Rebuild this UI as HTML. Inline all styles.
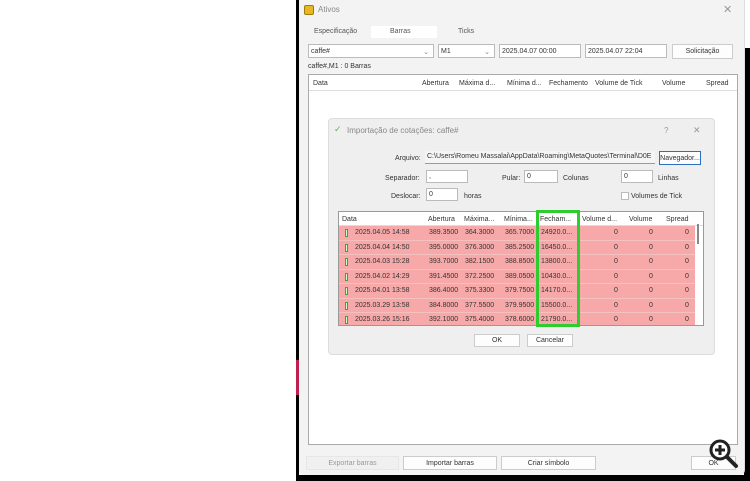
<!DOCTYPE html>
<html><head><meta charset="utf-8"><style>
*{margin:0;padding:0;box-sizing:border-box}
body{width:750px;height:481px;background:#fff;position:relative;overflow:hidden;font-family:"Liberation Sans",sans-serif;font-size:7px;color:#333}
.a{position:absolute}
.box{position:absolute;background:#fff;border:1px solid #bbb}
.btn{position:absolute;background:#fdfdfd;border:1px solid #ccc;text-align:center;color:#333}
.row{position:absolute;left:0;width:356px;height:14.5px;background:#f7a8a8;border-bottom:1px solid #f4c0c0}
.row span{position:absolute;top:3px}
.row i{position:absolute;left:6px;top:3px;width:3px;height:8px;border:1px solid #3a3;background:#cfc}
</style></head><body>
<div class="a" style="left:296px;top:0;width:3px;height:481px;background:#000"></div>
<div class="a" style="left:296px;top:360px;width:3px;height:35px;background:#c02050"></div>
<div class="a" style="left:744px;top:48px;width:6px;height:433px;background:#000"></div>
<div class="a" style="left:296px;top:475px;width:454px;height:6px;background:#000"></div>
<div class="a" style="left:299px;top:0;width:446px;height:475px;background:#f3f3f3;border-right:1px solid #ddd;border-radius:0 0 5px 5px"></div>
<div class="a" style="left:304px;top:5px;width:10px;height:10px;background:#e8b820;border-radius:2px;border:1px solid #a07c10"></div>
<div class="a" style="left:318px;top:5px;font-size:8px;color:#888">Ativos</div>
<div class="a" style="left:723px;top:3px;font-size:11px;color:#999">✕</div>
<div class="a" style="left:371px;top:26px;width:66px;height:12px;background:#fff"></div>
<div class="a" style="left:314px;top:28px;color:#555">Especificação</div>
<div class="a" style="left:390px;top:28px;color:#555">Barras</div>
<div class="a" style="left:458px;top:28px;color:#555">Ticks</div>
<div class="box" style="left:308px;top:44px;width:126px;height:14px;padding:3px 2px">caffe#<span style="position:absolute;right:4px;color:#888">⌄</span></div>
<div class="box" style="left:438px;top:44px;width:57px;height:14px;padding:3px 2px">M1<span style="position:absolute;right:4px;color:#888">⌄</span></div>
<div class="box" style="left:499px;top:44px;width:82px;height:14px;padding:3px 2px">2025.04.07 00:00</div>
<div class="box" style="left:585px;top:44px;width:82px;height:14px;padding:3px 2px">2025.04.07 22:04</div>
<div class="btn" style="left:672px;top:44px;width:61px;height:15px;padding-top:3px">Solicitação</div>
<div class="a" style="left:308px;top:63px">caffe#,M1 : 0 Barras</div>
<div class="box" style="left:308px;top:74px;width:430px;height:371px;border-color:#aaa"></div>
<div class="a" style="left:309px;top:75px;width:428px;height:16px;border-bottom:1px solid #ddd"></div>
<div class="a" style="left:313px;top:80px">Data</div>
<div class="a" style="left:422px;top:80px">Abertura</div>
<div class="a" style="left:459px;top:80px">Máxima d...</div>
<div class="a" style="left:507px;top:80px">Mínima d...</div>
<div class="a" style="left:549px;top:80px">Fechamento</div>
<div class="a" style="left:595px;top:80px">Volume de Tick</div>
<div class="a" style="left:662px;top:80px">Volume</div>
<div class="a" style="left:706px;top:80px">Spread</div>
<div class="a" style="left:328px;top:118px;width:387px;height:237px;background:#efefef;border:1px solid #ddd;border-radius:4px"></div>
<div class="a" style="left:334px;top:124px;font-size:9px;color:#6a6">✓</div>
<div class="a" style="left:347px;top:126px;font-size:8px;color:#888">Importação de cotações: caffe#</div>
<div class="a" style="left:664px;top:126px;font-size:8px;color:#999">?</div>
<div class="a" style="left:693px;top:125px;font-size:9px;color:#999">✕</div>
<div class="a" style="left:395px;top:155px">Arquivo:</div>
<div class="box" style="left:425px;top:151px;width:230px;height:13px;padding:2px;background:#f5f5f5;border:none;border-bottom:1px solid #999;white-space:nowrap;overflow:hidden">C:\Users\Romeu Massalai\AppData\Roaming\MetaQuotes\Terminal\D0E</div>
<div class="btn" style="left:659px;top:151px;width:42px;height:14px;padding-top:3px;border-color:#2a6fc0">Navegador...</div>
<div class="a" style="left:385px;top:175px">Separador:</div>
<div class="box" style="left:426px;top:170px;width:42px;height:13px;padding:2px">,</div>
<div class="a" style="left:502px;top:175px">Pular:</div>
<div class="box" style="left:524px;top:170px;width:34px;height:13px;padding:2px">0</div>
<div class="a" style="left:563px;top:175px">Colunas</div>
<div class="box" style="left:621px;top:170px;width:32px;height:13px;padding:2px">0</div>
<div class="a" style="left:658px;top:175px">Linhas</div>
<div class="a" style="left:391px;top:193px">Deslocar:</div>
<div class="box" style="left:426px;top:188px;width:32px;height:13px;padding:2px">0</div>
<div class="a" style="left:464px;top:193px">horas</div>
<div class="box" style="left:621px;top:192px;width:8px;height:8px"></div>
<div class="a" style="left:631px;top:193px">Volumes de Tick</div>
<div class="box" style="left:338px;top:211px;width:366px;height:115px;border-color:#999;overflow:hidden">
<div class="a" style="left:0;top:0;width:366px;height:14px;background:#fff;border-bottom:1px solid #ddd"></div>
<span class="a" style="left:3px;top:4px">Data</span><span class="a" style="left:89px;top:4px">Abertura</span><span class="a" style="left:125px;top:4px">Máxima...</span><span class="a" style="left:165px;top:4px">Mínima...</span><span class="a" style="left:201px;top:4px">Fecham...</span><span class="a" style="left:243px;top:4px">Volume d...</span><span class="a" style="left:290px;top:4px">Volume</span><span class="a" style="left:327px;top:4px">Spread</span>
<div class="row" style="top:14px"><i></i><span style="left:16px">2025.04.05 14:58</span><span style="left:90px">389.3500</span><span style="left:126px">364.3000</span><span style="left:166px">365.7000</span><span style="left:202px">24920.0...</span><span style="left:275px">0</span><span style="left:310px">0</span><span style="left:346px">0</span></div>
<div class="row" style="top:28.5px"><i></i><span style="left:16px">2025.04.04 14:50</span><span style="left:90px">395.0000</span><span style="left:126px">376.3000</span><span style="left:166px">385.2500</span><span style="left:202px">16450.0...</span><span style="left:275px">0</span><span style="left:310px">0</span><span style="left:346px">0</span></div>
<div class="row" style="top:43px"><i></i><span style="left:16px">2025.04.03 15:28</span><span style="left:90px">393.7000</span><span style="left:126px">382.1500</span><span style="left:166px">388.8500</span><span style="left:202px">13800.0...</span><span style="left:275px">0</span><span style="left:310px">0</span><span style="left:346px">0</span></div>
<div class="row" style="top:57.5px"><i></i><span style="left:16px">2025.04.02 14:29</span><span style="left:90px">391.4500</span><span style="left:126px">372.2500</span><span style="left:166px">389.0500</span><span style="left:202px">10430.0...</span><span style="left:275px">0</span><span style="left:310px">0</span><span style="left:346px">0</span></div>
<div class="row" style="top:72px"><i></i><span style="left:16px">2025.04.01 13:58</span><span style="left:90px">386.4000</span><span style="left:126px">375.3300</span><span style="left:166px">379.7500</span><span style="left:202px">14170.0...</span><span style="left:275px">0</span><span style="left:310px">0</span><span style="left:346px">0</span></div>
<div class="row" style="top:86.5px"><i></i><span style="left:16px">2025.03.29 13:58</span><span style="left:90px">384.8000</span><span style="left:126px">377.5500</span><span style="left:166px">379.9500</span><span style="left:202px">15500.0...</span><span style="left:275px">0</span><span style="left:310px">0</span><span style="left:346px">0</span></div>
<div class="row" style="top:101px"><i></i><span style="left:16px">2025.03.26 15:16</span><span style="left:90px">392.1000</span><span style="left:126px">375.4000</span><span style="left:166px">378.6000</span><span style="left:202px">21790.0...</span><span style="left:275px">0</span><span style="left:310px">0</span><span style="left:346px">0</span></div>
<div class="a" style="left:358px;top:12px;width:2px;height:20px;background:#888"></div>
</div>
<div class="a" style="left:536px;top:210px;width:44px;height:117px;border:3px solid #2ecc2e"></div>
<div class="btn" style="left:474px;top:334px;width:46px;height:13px;padding-top:2px">OK</div>
<div class="btn" style="left:527px;top:334px;width:46px;height:13px;padding-top:2px">Cancelar</div>
<div class="btn" style="left:306px;top:456px;width:93px;height:14px;padding-top:3px;color:#999;background:#f0f0f0;border-color:#e6e6e6">Exportar barras</div>
<div class="btn" style="left:403px;top:456px;width:94px;height:14px;padding-top:3px">Importar barras</div>
<div class="btn" style="left:501px;top:456px;width:95px;height:14px;padding-top:3px">Criar símbolo</div>
<div class="btn" style="left:691px;top:456px;width:45px;height:14px;padding-top:3px">OK</div>
<svg class="a" style="left:708px;top:438px" width="32" height="32" viewBox="0 0 32 32"><circle cx="12" cy="12" r="9" fill="#fff" stroke="#222" stroke-width="3"/><path d="M12 7v10M7 12h10" stroke="#222" stroke-width="3"/><path d="M19 19l9 9" stroke="#222" stroke-width="4" stroke-linecap="round"/></svg>
</body></html>
